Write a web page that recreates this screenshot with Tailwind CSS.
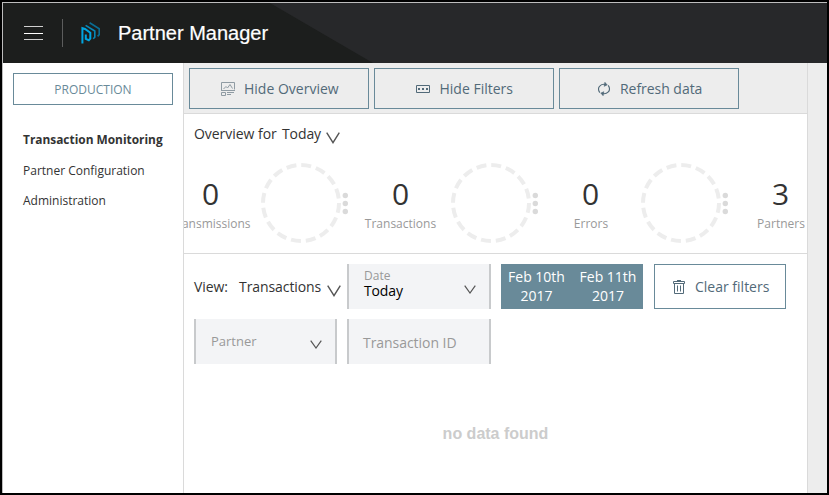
<!DOCTYPE html>
<html lang="en">
<head>
<meta charset="utf-8">
<title>Partner Manager</title>
<script src="https://cdn.jsdelivr.net/npm/@tailwindcss/browser@4"></script>
</head>
<body class="w-[829px] h-[495px] overflow-hidden bg-black p-[2px] font-['Open_Sans','Noto_Sans',sans-serif] text-[#333]">
<svg class="hidden">
  <symbol id="ring" viewBox="0 0 80 80"><circle cx="40" cy="40" r="38" fill="none" stroke="#ededed" stroke-width="4" stroke-dasharray="10 4.92"/></symbol>
  <symbol id="dots" viewBox="0 0 6 24"><g fill="#dadada"><circle cx="3.3" cy="4.5" r="2.7"/><circle cx="3.3" cy="12.5" r="2.7"/><circle cx="3.3" cy="20.5" r="2.7"/></g></symbol>
</svg>
<div class="flex h-[491px] w-[825px] flex-col border-l border-t border-[#bdbdbd] bg-white">
  <header class="relative flex h-[60px] shrink-0 items-center bg-[#1c1e1d]">
    <svg class="absolute inset-0 h-[60px] w-[824px]" viewBox="0 0 824 60"><path d="M267 0H824V60H370Z" fill="#27282a"/></svg>
    <svg class="relative ml-[21px] h-[16px] w-[19px]" viewBox="0 0 19 16" fill="none" stroke="#fff"><path d="M0 1.5H19M0 14.5H19" stroke="#d0d0d0"/><path d="M0 8.5H19"/></svg>
    <div class="relative ml-[19px] h-[28px] w-px bg-[#5c5d5d]"></div>
    <svg class="relative ml-[18px] h-[22px] w-[20px]" viewBox="0 0 20 22" fill="none"><path d="M1.4 21.5V6.2L4 7L9.3 10.8V16.6L7.8 18.2L4.8 16.8V12.4" stroke="#00a5e0" stroke-width="2"/><path d="M4.6 3.4L13.8 9V15.2L12.2 16.8" stroke="#0787b8" stroke-width="1.6"/><path d="M8.6 .8L18.2 6.8V12.6L16.6 14.4" stroke="#0a6d94" stroke-width="1.6"/></svg>
    <h1 class="relative ml-[17px] whitespace-nowrap font-['Liberation_Sans',Arial,sans-serif] text-[20px] leading-[24px] text-white [-webkit-text-stroke:0.2px_white]">Partner Manager</h1>
  </header>
  <div class="flex min-h-0 flex-1">
    <aside class="w-[181px] shrink-0 border-r border-[#dadada] pl-[10px] pt-[10px]">
      <button class="block h-[32px] w-[160px] border border-[#698a99] pt-px text-[12px] leading-[30px] text-[#698a99]">PRODUCTION</button>
      <nav class="ml-[10px] mt-[19px] flex flex-col whitespace-nowrap text-[12px] leading-[30px]">
        <a class="h-[32px] text-[11.9px] font-bold">Transaction Monitoring</a>
        <a class="h-[30px]">Partner Configuration</a>
        <a class="h-[30px]">Administration</a>
      </nav>
    </aside>
    <main class="flex w-[624px] shrink-0 flex-col border-r border-[#dadada]">
      <div class="flex h-[51px] shrink-0 gap-[5px] border-b border-[#dadada] bg-[#ededed] pl-[5px] pt-[5px] text-[14px] text-[#526a79]">
        <button class="flex h-[41px] w-[180px] items-center border border-[#698a99] pl-[31px]">
          <svg class="h-[14px] w-[14px]" viewBox="0 0 14 14" fill="none" stroke="#8f9ba3"><path d="M.5 8V.5H13.5V7.5M2.5 7L5 4.5L6.5 6L9 2.5L11.5 6.5M0 8.5H14M.5 10.5H4.5V13.5H.5ZM6 10.5H13M6 12.5H10"/></svg>
          <span class="ml-[9px]">Hide Overview</span>
        </button>
        <button class="flex h-[41px] w-[180px] items-center border border-[#698a99] pl-[41px]">
          <svg class="h-[8px] w-[14px]" viewBox="0 0 14 8"><path d="M.5 .5H13.5V7.5H.5Z" fill="none" stroke="#526a79"/><path d="M2 3H4V5H2ZM6 3H8V5H6ZM10 3H12V5H10Z" fill="#526a79"/></svg>
          <span class="ml-[9.5px]">Hide Filters</span>
        </button>
        <button class="flex h-[41px] w-[180px] items-center border border-[#698a99] pl-[38px]">
          <svg class="h-[14px] w-[12px]" viewBox="0 0 12 14" fill="none" stroke="#526a79" stroke-width="1.1"><path d="M1.8 10.6C.3 8.4 .2 5.5 2 3.8C3.5 2.3 5.5 2 8 2.6M10.2 3.4C11.7 5.6 11.8 8.5 10 10.2C8.5 11.7 6.5 12 4 11.4"/><path d="M6.8 0L9.4 3L6 4.4Z M5.2 14L2.6 11L6 9.6Z" fill="#526a79" stroke-width=".3"/></svg>
          <span class="ml-[10px] tracking-[-0.04px]">Refresh data</span>
        </button>
      </div>
      <section class="h-[140px] shrink-0 overflow-hidden border-b border-[#dadada]">
        <div class="flex h-[41px] items-center whitespace-nowrap pl-[10px] text-[14px] tracking-[-0.04px]">
          <span class="-mt-[2px] w-[88px]">Overview for</span><span class="-mt-[2px] tracking-[-0.1px]">Today</span>
          <svg class="ml-[5.4px] mt-[7px] h-[12px] w-[14px]" viewBox="0 0 14 12" fill="none" stroke="#555" stroke-width="1.4"><path d="M.7 .7L7 10.7L13.3 .7"/></svg>
        </div>
        <div class="flex pt-[8px] text-center">
          <div class="flex w-[77px] shrink-0 flex-col items-center pt-[9px]"><div class="-ml-[24px] text-[30px] leading-[44px]">0</div><div class="-ml-[24px] text-[12px] leading-[15px] text-[#999]">Transmissions</div></div>
          <svg class="h-[80px] w-[80px] shrink-0"><use href="#ring"/></svg><svg class="ml-[1px] mt-[28px] h-[24px] w-[6px] shrink-0"><use href="#dots"/></svg>
          <div class="flex w-[103px] shrink-0 flex-col items-center pl-[2px] pt-[9px]"><div class="text-[30px] leading-[44px]">0</div><div class="text-[12px] leading-[15px] text-[#999]">Transactions</div></div>
          <svg class="h-[80px] w-[80px] shrink-0"><use href="#ring"/></svg><svg class="ml-[1px] mt-[28px] h-[24px] w-[6px] shrink-0"><use href="#dots"/></svg>
          <div class="flex w-[103px] shrink-0 flex-col items-center pl-[2px] pt-[9px]"><div class="text-[30px] leading-[44px]">0</div><div class="pl-px text-[12px] leading-[15px] text-[#999]">Errors</div></div>
          <svg class="h-[80px] w-[80px] shrink-0"><use href="#ring"/></svg><svg class="ml-[1px] mt-[28px] h-[24px] w-[6px] shrink-0"><use href="#dots"/></svg>
          <div class="flex w-[103px] shrink-0 flex-col items-center pl-[2px] pt-[9px]"><div class="text-[30px] leading-[44px]">3</div><div class="pl-px text-[12px] leading-[15px] text-[#999]">Partners</div></div>
        </div>
      </section>
      <section class="flex min-h-0 flex-1 flex-col pl-[10px] pt-[10px]">
        <div class="flex h-[45px]">
          <div class="flex w-[153px] items-center whitespace-nowrap text-[14px] tracking-[-0.08px]">
            <span class="w-[45px]">View:</span><span>Transactions</span>
            <svg class="ml-[5.4px] mt-[9px] h-[12px] w-[14px]" viewBox="0 0 14 12" fill="none" stroke="#555" stroke-width="1.4"><path d="M.7 .7L7 10.7L13.3 .7"/></svg>
          </div>
          <div class="flex w-[144px] border-x-2 border-[#c8cacc] bg-[#f3f4f6] pl-[15px]">
            <div class="w-[100px]"><div class="pt-[4px] text-[12px] leading-[15px] text-[#999]">Date</div><div class="text-[14px] leading-[16px] tracking-[-0.15px] text-black">Today</div></div>
            <svg class="mt-[21px] h-[9px] w-[12px]" viewBox="0 0 12 9" fill="none" stroke="#555" stroke-width="1.2"><path d="M.7 .7L6 8L11.3 .7"/></svg>
          </div>
          <div class="ml-[10px] flex w-[142px] bg-[#698a99] pt-[3px] text-center text-[14px] leading-[19px] text-white">
            <div class="w-[71px] shrink-0">Feb 10th<br>2017</div><div class="w-[72px] shrink-0">Feb 11th<br>2017</div>
          </div>
          <button class="ml-[11px] flex w-[132px] items-center border border-[#698a99] pl-[18px] text-[14px] text-[#526a79]">
            <svg class="h-[14px] w-[12px]" viewBox="0 0 12 14" fill="none" stroke="#526a79"><path d="M4 .5H8M.5 1.5H11.5V3.5H.5ZM1.5 3.5V13.5H10.5V3.5M4.5 5.5V11.5M7.5 5.5V11.5"/></svg>
            <span class="ml-[10px]">Clear filters</span>
          </button>
        </div>
        <div class="mt-[10px] flex h-[45px] gap-[10px] text-[#999]">
          <div class="flex w-[143px] border-x-2 border-[#c8cacc] bg-[#f3f4f6] pl-[15px]">
            <div class="w-[99px] text-[13px] leading-[44px]">Partner</div>
            <svg class="mt-[21px] h-[9px] w-[12px]" viewBox="0 0 12 9" fill="none" stroke="#555" stroke-width="1.2"><path d="M.7 .7L6 8L11.3 .7"/></svg>
          </div>
          <div class="w-[144px] border-x-2 border-[#c8cacc] bg-[#f3f4f6] pl-[14px] text-[14px] leading-[47px] tracking-[-0.05px]">Transaction ID</div>
        </div>
        <div class="mt-[60px] w-[603px] text-center font-['Liberation_Sans',Arial,sans-serif] text-[16px] font-bold leading-[20px] text-[#ccc]">no data found</div>
      </section>
    </main>
    <div class="flex-1 bg-[#ededed]"></div>
  </div>
</div>
</body>
</html>
